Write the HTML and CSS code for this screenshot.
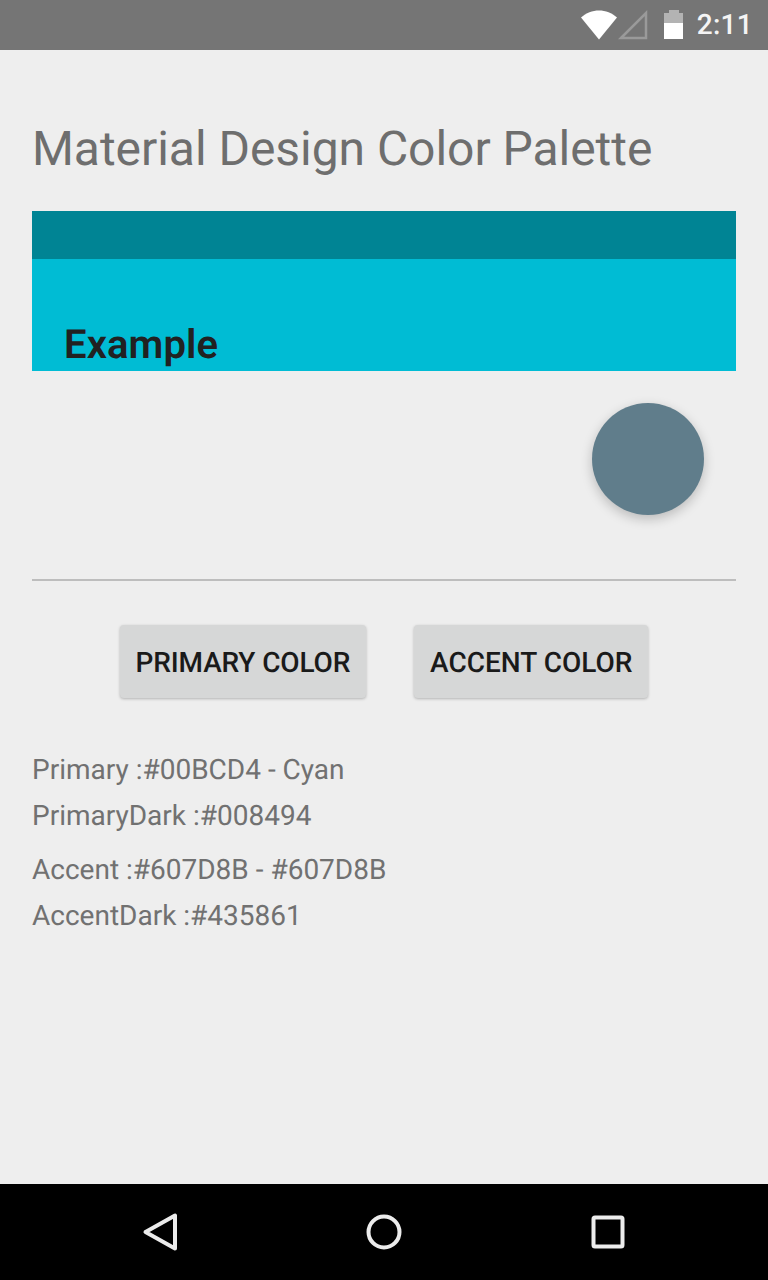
FILE: index.html
```html
<!DOCTYPE html>
<html lang="en">
<head>
<meta charset="utf-8">
<title>Material Design Color Palette</title>
<link rel="stylesheet" href="styles.css">
</head>
<body>
<div class="screen">
  <header class="status-bar">
    <svg class="status-icons" width="104" height="50" viewBox="0 0 104 50" aria-hidden="true">
      <path class="solid" d="M1 17.500C6 13 12.500 10.500 19 10.500C25.500 10.500 32 13 37 17.500L19 39.500Z"/>
      <path class="signal" d="M41 38L66 13V38Z"/>
      <path class="dim" d="M89 10H99V13H103V23H84V13H89Z"/>
      <path class="solid" d="M84 23H103V39H84Z"/>
    </svg>
    <span class="clock">2:11</span>
  </header>
  <main class="content">
    <h1 class="title">Material Design Color Palette</h1>
    <section class="preview">
      <div class="preview-dark"></div>
      <div class="preview-primary"><span class="preview-label">Example</span></div>
    </section>
    <div class="fab-row"><div class="fab"></div></div>
    <hr class="divider">
    <div class="buttons">
      <button class="btn btn-primary">PRIMARY COLOR</button>
      <button class="btn btn-accent">ACCENT COLOR</button>
    </div>
    <div class="info">
      <p class="line">Primary :#00BCD4 - Cyan</p>
      <p class="line">PrimaryDark :#008494</p>
    </div>
    <div class="info info-accent">
      <p class="line">Accent :#607D8B - #607D8B</p>
      <p class="line">AccentDark :#435861</p>
    </div>
  </main>
  <nav class="nav-bar">
    <svg class="nav-icon" width="36" height="40" viewBox="0 0 36 40" aria-hidden="true"><path d="M3.500 20L33 3.500V36.500Z"/></svg>
    <svg class="nav-icon" width="36" height="40" viewBox="0 0 36 40" aria-hidden="true"><circle cx="18" cy="20" r="15.500"/></svg>
    <svg class="nav-icon" width="36" height="40" viewBox="0 0 36 40" aria-hidden="true"><rect x="3.500" y="5.500" width="29" height="29" rx="1.500"/></svg>
  </nav>
</div>
</body>
</html>
```
FILE: styles.css
```css
* { box-sizing: border-box; }
html, body { margin: 0; padding: 0; }
body { font-family: Roboto, "Liberation Sans", sans-serif; background: #eeeeee; text-rendering: geometricPrecision; }
.screen { width: 768px; height: 1280px; display: flex; flex-direction: column; overflow: hidden; }
.status-bar { height: 50px; flex: none; background: #757575; display: flex; align-items: center; justify-content: flex-end; padding-right: 15px; }
.status-icons { display: block; margin-right: 13px; }
.solid { fill: #ffffff; }
.dim { fill: #b3b3b3; }
.signal { fill: none; stroke: #9a9a9a; stroke-width: 2.500; }
.clock { color: #f4f4f4; font-size: 28px; font-weight: 500; line-height: 52px; letter-spacing: 0.3px; }
.content { flex: 1; padding: 0 32px; }
.title { margin: 67px 0 0; font-size: 48px; font-weight: 400; line-height: 64px; letter-spacing: -0.04px; color: #6e6e6e; }
.preview { margin-top: 30px; }
.preview-dark { height: 48px; background: #008494; }
.preview-primary { height: 112px; background: #00bcd4; padding: 62px 0 0 32px; }
.preview-label { display: block; font-size: 40px; font-weight: 600; line-height: 48px; letter-spacing: 0.1px; color: #212121; }
.fab-row { display: flex; justify-content: flex-end; padding: 32px 32px 0 0; }
.fab { width: 112px; height: 112px; border-radius: 50%; background: #607d8b; box-shadow: 0 4px 12px rgba(0,0,0,.22); }
.divider { margin: 64px 0 0; border: 0; height: 2px; background: #bdbdbd; }
.buttons { display: flex; justify-content: center; gap: 48px; margin-top: 44px; }
.btn { height: 73px; padding: 2px 16px 0; border: 0; border-radius: 4px; background: #d6d7d7; color: #1a1a1a; font-family: inherit; font-size: 28px; font-weight: 500; box-shadow: 0 1px 3px rgba(0,0,0,.25); text-rendering: geometricPrecision; }
.btn-primary { letter-spacing: -0.15px; }
.info { margin-top: 49px; }
.info-accent { margin-top: 8px; }
.line { margin: 0; font-size: 28px; line-height: 46px; color: #717171; }
.nav-bar { height: 96px; flex: none; background: #000000; display: flex; justify-content: space-between; align-items: center; padding: 0 142px; }
.nav-icon { display: block; fill: none; stroke: #ececec; stroke-width: 4; stroke-linejoin: round; }
```
